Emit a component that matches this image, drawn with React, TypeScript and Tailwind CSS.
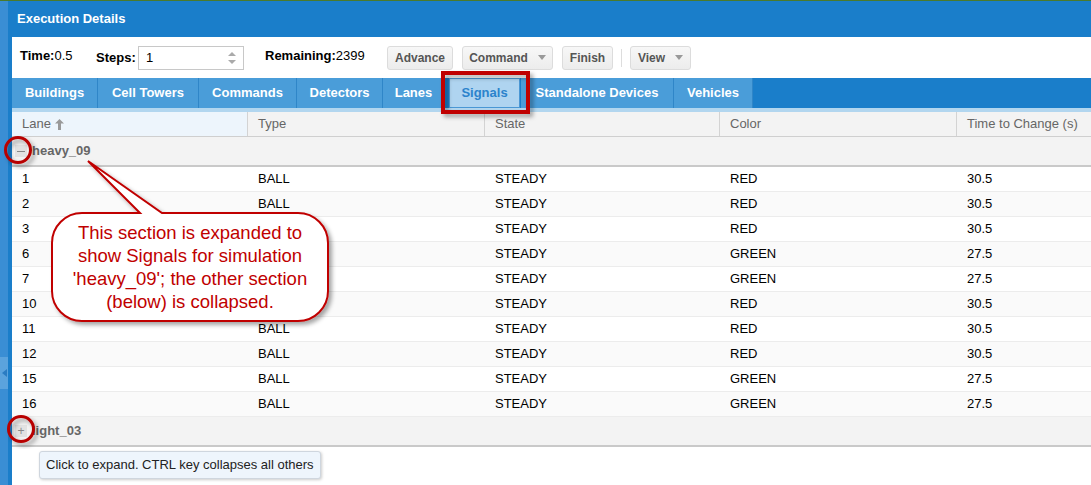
import React from "react";

const rows = [
  ["1", "BALL", "STEADY", "RED", "30.5"],
  ["2", "BALL", "STEADY", "RED", "30.5"],
  ["3", "BALL", "STEADY", "RED", "30.5"],
  ["6", "BALL", "STEADY", "GREEN", "27.5"],
  ["7", "BALL", "STEADY", "GREEN", "27.5"],
  ["10", "BALL", "STEADY", "RED", "30.5"],
  ["11", "BALL", "STEADY", "RED", "30.5"],
  ["12", "BALL", "STEADY", "RED", "30.5"],
  ["15", "BALL", "STEADY", "GREEN", "27.5"],
  ["16", "BALL", "STEADY", "GREEN", "27.5"],
];

const tabs: { label: string; w: string; sel?: boolean }[] = [
  { label: "Buildings", w: "w-[86px]" },
  { label: "Cell Towers", w: "w-[101px]" },
  { label: "Commands", w: "w-[98px]" },
  { label: "Detectors", w: "w-[86px]" },
  { label: "Lanes", w: "w-[62px]" },
  { label: "Signals", w: "w-[76px]", sel: true },
  { label: "Standalone Devices", w: "w-[153px]" },
  { label: "Vehicles", w: "w-[79px]" },
];

const cols = "grid grid-cols-[236px_237px_235px_237px_1fr]";

function Caret() {
  return (
    <svg width="8" height="5" viewBox="0 0 8 5" className="ml-[10px]">
      <path d="M0 0 L8 0 L4 5 Z" fill="#999" />
    </svg>
  );
}

function Btn({ children, w }: { children: React.ReactNode; w: string }) {
  return (
    <div
      className={`${w} h-[24px] flex items-center justify-center rounded-[3px] border border-[#dcdcdc] bg-gradient-to-b from-[#f7f7f7] to-[#ececec] text-[12px] font-bold text-[#555]`}
    >
      {children}
    </div>
  );
}

export default function App() {
  return (
    <div className="relative w-[1091px] h-[485px] overflow-hidden bg-white font-['Liberation_Sans',Arial,sans-serif]">
      <div className="h-[1px] bg-[#4a7a2c]" />
      <div className="flex h-[484px]">
        {/* left strip */}
        <div className="w-[8px] bg-[#3a8ed4] flex flex-col">
          <div className="h-[356px]" />
          <div className="h-[32px] bg-[#5ba3dd] flex items-center justify-center">
            <svg width="5" height="8" viewBox="0 0 5 8">
              <path d="M5 0 L0 4 L5 8 Z" fill="#2a7cc2" />
            </svg>
          </div>
        </div>
        {/* panel */}
        <div className="flex-1 bg-[#1a7eca] flex flex-col">
          <div className="h-[36px] flex items-center pl-[9px] text-white font-bold text-[13px]">
            Execution Details
          </div>
          <div className="ml-[4px] flex-1 bg-white flex flex-col">
            {/* toolbar */}
            <div className="h-[41px] flex items-center pl-[8px] text-[13px] text-black">
              <div className="w-[76px] -mt-[4px]">
                <span className="font-bold">Time:</span>
                <span>0.5</span>
              </div>
              <span className="font-bold w-[42px]">Steps:</span>
              <div className="w-[106px] h-[24px] border border-[#c8c8c8] flex items-center pl-[7px] justify-between pr-[6px]">
                <span>1</span>
                <svg width="10" height="14" viewBox="0 0 10 14">
                  <path d="M1 5 L5 1 L9 5 Z" fill="#aaa" />
                  <path d="M1 9 L5 13 L9 9 Z" fill="#aaa" />
                </svg>
              </div>
              <div className="ml-[21px] w-[122px] -mt-[4px]">
                <span className="font-bold">Remaining:</span>
                <span>2399</span>
              </div>
              <Btn w="w-[66px]">Advance</Btn>
              <div className="ml-[9px]">
                <Btn w="w-[91px]">
                  Command
                  <Caret />
                </Btn>
              </div>
              <div className="ml-[9px]">
                <Btn w="w-[51px]">Finish</Btn>
              </div>
              <div className="ml-[8px] w-[1px] h-[18px] bg-[#ddd]" />
              <div className="ml-[8px]">
                <Btn w="w-[61px]">
                  View
                  <Caret />
                </Btn>
              </div>
            </div>
            {/* tab bar */}
            <div className="-ml-[4px] pl-[4px] h-[30px] bg-[#1a7eca] flex items-end">
              {tabs.map((t) =>
                t.sel ? (
                  <div key={t.label} className={`${t.w} h-[30px] pl-[4px] pr-[1px] flex`}>
                    <div className="flex-1 h-[30px] bg-[#afd4f0] border border-[#4a97d4] flex items-center justify-center text-[13px] font-bold text-[#2b83cc]">
                      {t.label}
                    </div>
                  </div>
                ) : (
                  <div
                    key={t.label}
                    className={`${t.w} h-[30px] bg-[#4a9dd9] border-r border-[#2f86c8] flex items-center justify-center text-[13px] font-bold text-white`}
                  >
                    {t.label}
                  </div>
                )
              )}
            </div>
            <div className="h-[4px] bg-[#b2d6ef]" />
            {/* table header */}
            <div className={`${cols} h-[25px] bg-[#f3f3f3] border-b border-[#cfcfcf] text-[13px] text-[#666]`}>
              <div className="bg-[#edf5fc] border-r border-[#d3d3d3] flex items-center pl-[10px]">
                Lane
                <svg width="9" height="11" viewBox="0 0 9 11" className="ml-[4px]">
                  <path d="M4.5 0 L9 4.5 L6 4.5 L6 11 L3 11 L3 4.5 L0 4.5 Z" fill="#999" />
                </svg>
              </div>
              <div className="border-r border-[#d3d3d3] flex items-center pl-[10px]">Type</div>
              <div className="border-r border-[#d3d3d3] flex items-center pl-[10px]">State</div>
              <div className="border-r border-[#d3d3d3] flex items-center pl-[10px]">Color</div>
              <div className="flex items-center pl-[10px]">Time to Change (s)</div>
            </div>
            {/* group 1 */}
            <div className="h-[30px] bg-[#f3f3f3] border-b-2 border-[#c9c9c9] flex items-center pl-[3px] text-[13px] font-bold text-[#666]">
              <div className="w-[12px] h-[12px] bg-[#e2e2e2] flex items-center justify-center">
                <div className="w-[8px] h-[1px] bg-[#888]" />
              </div>
              <span className="ml-[5px]">heavy_09</span>
            </div>
            {rows.map((r, i) => (
              <div
                key={i}
                className={`${cols} h-[25px] border-b border-[#ececec] text-[13px] text-black ${i % 2 === 1 ? "bg-[#fafafa]" : "bg-white"}`}
              >
                {r.map((c, j) => (
                  <div key={j} className="flex items-center pl-[10px]">
                    {c}
                  </div>
                ))}
              </div>
            ))}
            {/* group 2 */}
            <div className="h-[30px] bg-[#f3f3f3] border-b-2 border-[#c9c9c9] flex items-center pl-[3px] text-[13px] font-bold text-[#666]">
              <div className="w-[12px] h-[12px] bg-[#e2e2e2] flex items-center justify-center text-[12px] font-normal text-[#888] leading-none">
                +
              </div>
              <span className="ml-[5px]">light_03</span>
            </div>
          </div>
        </div>
      </div>

      {/* tooltip */}
      <div className="absolute left-[39px] top-[451px] w-[282px] h-[28px] rounded-[3px] border border-[#cfd6de] bg-[#eef5fc] shadow-[1px_1px_3px_rgba(0,0,0,0.2)] flex items-center pl-[6px] text-[13px] text-[#222]">
        Click to expand. CTRL key collapses all others
      </div>

      {/* annotations */}
      <svg className="absolute left-0 top-0 pointer-events-none" width="1091" height="485" viewBox="0 0 1091 485">
        <defs>
          <filter id="sh" x="-20%" y="-20%" width="150%" height="150%">
            <feDropShadow dx="3" dy="3" stdDeviation="2" floodColor="#000" floodOpacity="0.35" />
          </filter>
        </defs>
        <rect x="443" y="73" width="85" height="39" fill="none" stroke="#c00000" strokeWidth="4" filter="url(#sh)" />
        <circle cx="18" cy="150" r="12.5" fill="none" stroke="#b80000" strokeWidth="3" filter="url(#sh)" />
        <circle cx="21" cy="429" r="12.5" fill="none" stroke="#b80000" strokeWidth="3" filter="url(#sh)" />
        <path
          d="M82 213 L140 213 L88 161 L162 213 L298 213 A30 30 0 0 1 328 243 L328 291 A30 30 0 0 1 298 321 L82 321 A30 30 0 0 1 52 291 L52 243 A30 30 0 0 1 82 213 Z"
          fill="#fff"
          stroke="#c00000"
          strokeWidth="2"
          filter="url(#sh)"
        />
      </svg>
      <div className="absolute left-[52px] top-[221px] w-[276px] text-center text-[18.5px] leading-[23px] text-[#c00000] pointer-events-none">
        This section is expanded to
        <br />
        show Signals for simulation
        <br />
        'heavy_09'; the other section
        <br />
        (below) is collapsed.
      </div>
    </div>
  );
}
